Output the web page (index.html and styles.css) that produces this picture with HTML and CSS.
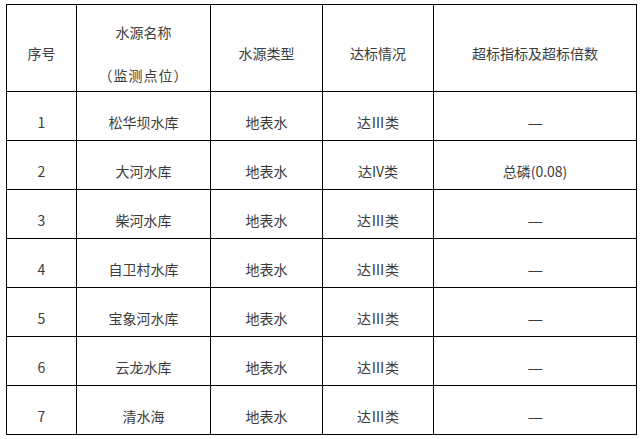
FILE: index.html
```html
<!DOCTYPE html>
<html lang="zh-CN">
<head>
<meta charset="utf-8">
<title>水源达标情况</title>
<link rel="stylesheet" href="styles.css">
</head>
<body>
<table class="wq">
  <colgroup>
    <col class="c1"><col class="c2"><col class="c3"><col class="c4"><col class="c5">
  </colgroup>
  <thead>
    <tr class="head">
      <th>序号</th>
      <th><div class="line">水源名称</div><div class="line sub">（监测点位）</div></th>
      <th>水源类型</th>
      <th>达标情况</th>
      <th>超标指标及超标倍数</th>
    </tr>
  </thead>
  <tbody>
    <tr><td>1</td><td>松华坝水库</td><td>地表水</td><td>达Ⅲ类</td><td><span class="dash">—</span></td></tr>
    <tr><td>2</td><td>大河水库</td><td>地表水</td><td>达IV类</td><td>总磷(0.08)</td></tr>
    <tr><td>3</td><td>柴河水库</td><td>地表水</td><td>达Ⅲ类</td><td><span class="dash">—</span></td></tr>
    <tr><td>4</td><td>自卫村水库</td><td>地表水</td><td>达Ⅲ类</td><td><span class="dash">—</span></td></tr>
    <tr><td>5</td><td>宝象河水库</td><td>地表水</td><td>达Ⅲ类</td><td><span class="dash">—</span></td></tr>
    <tr><td>6</td><td>云龙水库</td><td>地表水</td><td>达Ⅲ类</td><td><span class="dash">—</span></td></tr>
    <tr><td>7</td><td>清水海</td><td>地表水</td><td>达Ⅲ类</td><td><span class="dash">—</span></td></tr>
  </tbody>
</table>
</body>
</html>
```
FILE: styles.css
```css
html, body {
  margin: 0;
  padding: 0;
  background: #fff;
}
body {
  padding: 4px 0 0 6px;
  font-family: "Noto Sans CJK SC", "Noto Sans", sans-serif;
  font-size: 14px;
  color: #3c3c3c;
}
.wq {
  border-collapse: collapse;
  table-layout: fixed;
  width: 630px;
}
.c1 { width: 70px; }
.c2 { width: 134px; }
.c3 { width: 112px; }
.c4 { width: 111px; }
.c5 { width: 203px; }
.wq th, .wq td {
  border: 1px solid #000;
  text-align: center;
  vertical-align: middle;
  font-weight: normal;
  line-height: 22px;
  padding: 12px 0 0 0;
  color: #3c3c3c;
}
.wq tr { height: 49px; }
.wq tr.head { height: 87px; }
.wq th { padding-top: 10px; }
.wq th .line { color: #3c3c3c; }
.wq th .sub { margin-top: 21px; letter-spacing: 1px; }
.dash {
  display: inline-block;
  transform: scaleX(1.25);
}
```
